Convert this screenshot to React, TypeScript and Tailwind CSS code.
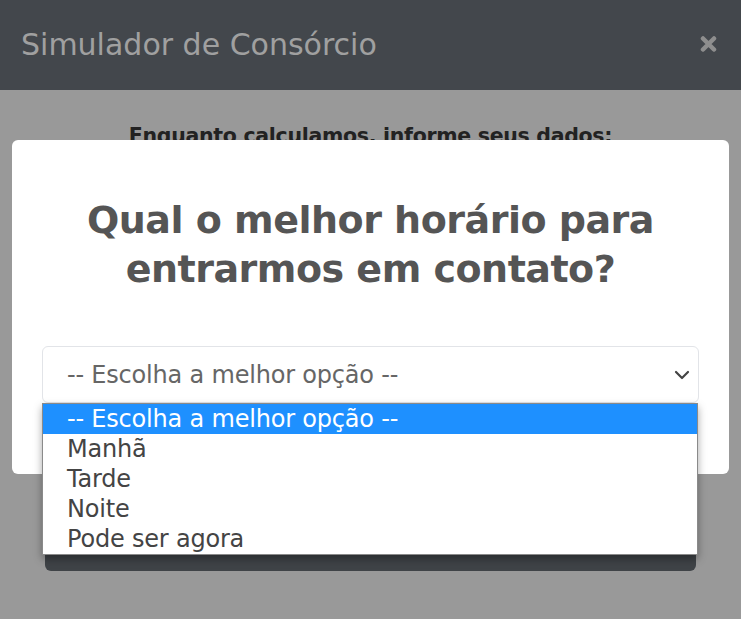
import React from "react";

const options = ["Manhã", "Tarde", "Noite", "Pode ser agora"];

const App: React.FC = () => {
  return (
    <div className="relative w-[741px] h-[619px] overflow-hidden bg-[#999999] font-['DejaVu_Sans',sans-serif]">
      {/* underlying modal */}
      <div className="h-[90px] bg-[#43474c] flex items-center justify-between pl-[21px] pr-[24px]">
        <h1 className="text-[30px] font-normal text-[#a0a0a0] tracking-[0px] mt-[-2px]">Simulador de Consórcio</h1>
        <svg width="17" height="18" viewBox="0 0 17 18" className="mt-[-2px]">
          <path d="M3 3.5 L14 14.5 M14 3.5 L3 14.5" stroke="#8e8e8e" strokeWidth="4.5" strokeLinecap="round" />
        </svg>
      </div>
      <div className="flex flex-col items-center pt-[31px]">
        <p className="text-[20.5px] font-bold text-[#222] tracking-[-0.3px]">Enquanto calculamos, informe seus dados:</p>
        <div className="mt-[359px] w-[651px] h-[60px] rounded-md bg-[#3f4347]"></div>
      </div>

      {/* overlay card */}
      <div className="absolute left-[12px] top-[140px] w-[717px] h-[334px] bg-white rounded-md">
        <h2 className="pt-[56px] text-center text-[38px] leading-[49px] font-bold text-[#555] tracking-[-0.5px]">
          Qual o melhor horário para
          <br />
          entrarmos em contato?
        </h2>
        <div className="mt-[52px] ml-[30px] w-[657px] h-[57px] border border-[#e2e4e8] rounded-md flex items-center justify-between pl-[24px] pr-[8px]">
          <span className="text-[24px] text-[#666] tracking-[-0.2px]">-- Escolha a melhor opção --</span>
          <svg width="16" height="10" viewBox="0 0 16 10">
            <path d="M2 2 L8 8 L14 2" stroke="#444" strokeWidth="2.2" fill="none" strokeLinecap="round" strokeLinejoin="round" />
          </svg>
        </div>
      </div>

      {/* open dropdown list */}
      <div className="absolute left-[42px] top-[403px] w-[656px] h-[152px] bg-white border border-[#8a8a8a] shadow-[0_4px_8px_rgba(0,0,0,0.35)]">
        <div className="h-[30px] bg-[#1e90ff] flex items-center pl-[24px] text-[24px] text-white tracking-[-0.2px]">
          -- Escolha a melhor opção --
        </div>
        {options.map((o) => (
          <div key={o} className="h-[30px] flex items-center pl-[24px] text-[24px] text-[#444] tracking-[-0.2px]">
            {o}
          </div>
        ))}
      </div>
    </div>
  );
};

export default App;
